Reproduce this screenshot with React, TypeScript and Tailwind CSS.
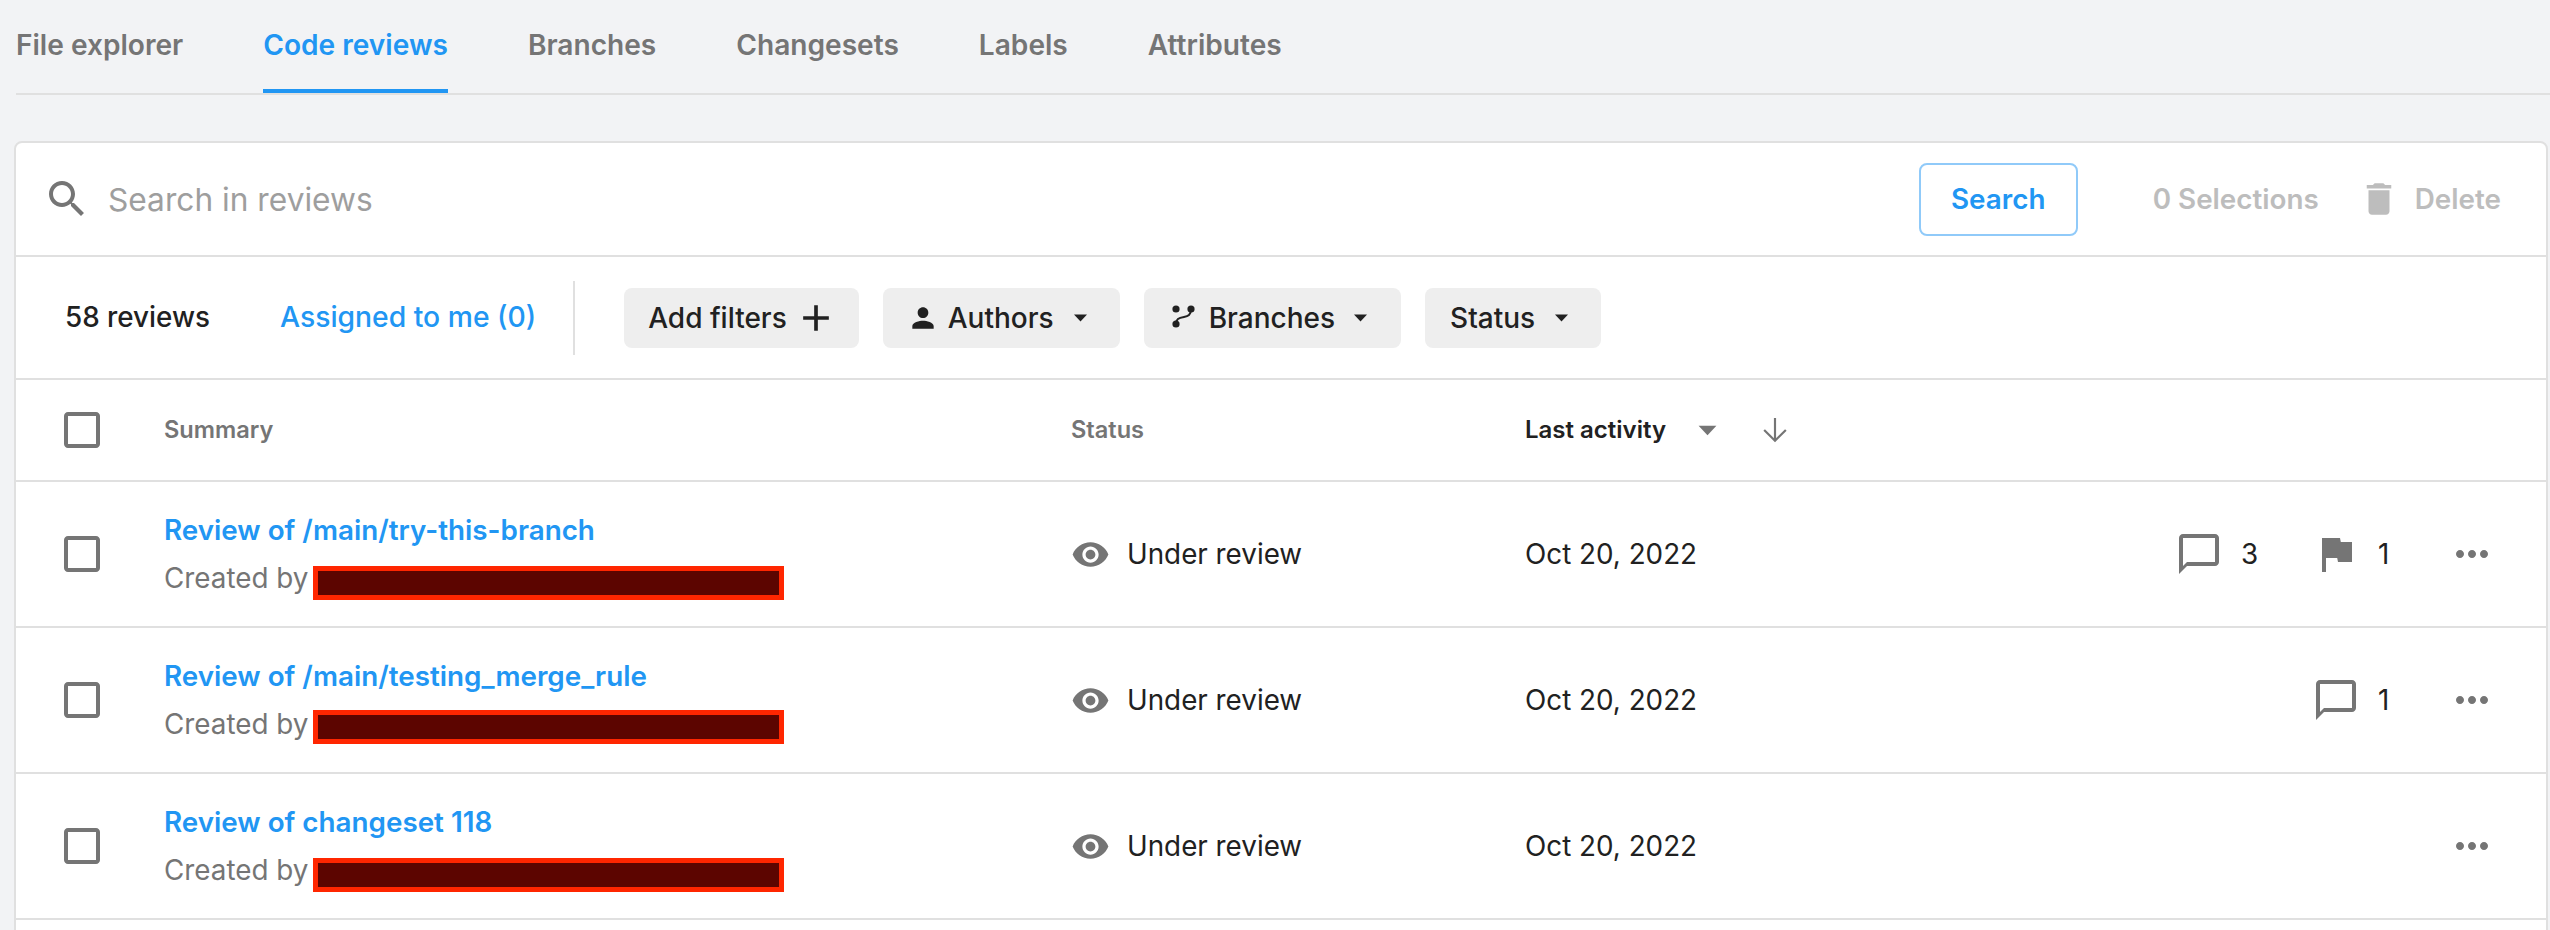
import React from "react";

const ICON = {
  search: "M15.5 14h-.79l-.28-.27C15.41 12.59 16 11.11 16 9.5 16 5.91 13.09 3 9.5 3S3 5.91 3 9.5 5.91 16 9.5 16c1.61 0 3.09-.59 4.23-1.57l.27.28v.79l5 4.99L20.49 19l-4.99-5zm-6 0C7.01 14 5 11.99 5 9.5S7.01 5 9.5 5 14 7.01 14 9.5 11.99 14 9.5 14z",
  trash: "M6 19c0 1.1.9 2 2 2h8c1.1 0 2-.9 2-2V7H6v12zM19 4h-3.5l-1-1h-5l-1 1H5v2h14V4z",
  eye: "M12 4.5C7 4.5 2.73 7.61 1 12c1.73 4.39 6 7.5 11 7.5s9.27-3.11 11-7.5c-1.73-4.39-6-7.5-11-7.5zM12 17c-2.76 0-5-2.24-5-5s2.24-5 5-5 5 2.24 5 5-2.24 5-5 5zm0-8c-1.66 0-3 1.34-3 3s1.34 3 3 3 3-1.34 3-3-1.34-3-3-3z",
  comment: "M20 2H4c-1.1 0-2 .9-2 2v18l4-4h14c1.1 0 2-.9 2-2V4c0-1.1-.9-2-2-2zm0 14H6l-2 2V4h16v12z",
  flag: "M14.4 6L14 4H5v17h2v-7h5.6l.4 2h7V6z",
  more: "M6 10c-1.1 0-2 .9-2 2s.9 2 2 2 2-.9 2-2-.9-2-2-2zm12 0c-1.1 0-2 .9-2 2s.9 2 2 2 2-.9 2-2-.9-2-2-2zm-6 0c-1.1 0-2 .9-2 2s.9 2 2 2 2-.9 2-2-.9-2-2-2z",
  check: "M19 5v14H5V5h14m0-2H5c-1.1 0-2 .9-2 2v14c0 1.1.9 2 2 2h14c1.1 0 2-.9 2-2V5c0-1.1-.9-2-2-2z",
  person: "M12 12c2.21 0 4-1.79 4-4s-1.79-4-4-4-4 1.79-4 4 1.79 4 4 4zm0 2c-2.67 0-8 1.34-8 4v2h16v-2c0-2.66-5.33-4-8-4z",
  add: "M19 13h-6v6h-2v-6H5v-2h6V5h2v6h6v2z",
};

function Icon({ d, className }: { d: string; className: string }) {
  return (
    <svg viewBox="0 0 24 24" fill="currentColor" className={className}>
      <path d={d} />
    </svg>
  );
}

function Caret({ className }: { className: string }) {
  return (
    <svg viewBox="0 0 13 8" fill="currentColor" className={className}>
      <path d="M0 0.5h13L6.5 7.5z" />
    </svg>
  );
}

function BranchIcon() {
  return (
    <svg viewBox="0 0 32 32" className="w-[32px] h-[32px] shrink-0 text-[#212121]" fill="currentColor">
      <circle cx="8" cy="7" r="3.6" />
      <circle cx="23" cy="7" r="3.6" />
      <circle cx="8" cy="22" r="3.6" />
      <path d="M8 22c0-5 2.500-6 8-7 4-.8 7-2 7-8" fill="none" stroke="currentColor" strokeWidth="2" />
    </svg>
  );
}

function Tab({ label, active }: { label: string; active?: boolean }) {
  return (
    <div
      className={
        active
          ? "h-[93px] flex items-center pt-[1px] border-b-[4px] border-[#2196f3] text-[#2196f3] text-[28.1px] font-semibold"
          : "h-[93px] flex items-center pt-[1px] border-b-[4px] border-transparent text-[#757575] text-[28.1px] font-semibold"
      }
    >
      {label}
    </div>
  );
}

function Chip({ children, className }: { children: React.ReactNode; className: string }) {
  return (
    <div className={"h-[60px] flex items-center bg-[#eeeeee] rounded-[8px] text-[28px] font-medium text-[#212121] " + className}>
      {children}
    </div>
  );
}

function Row({
  title,
  redactClass,
  comments,
  flags,
}: {
  title: string;
  redactClass: string;
  comments?: number;
  flags?: number;
}) {
  return (
    <div className="h-[146px] flex items-center border-b-2 border-[#e0e0e0]">
      <div className="w-[148px] shrink-0 pl-[42px]">
        <Icon d={ICON.check} className="w-[48px] h-[48px] text-[#757575]" />
      </div>
      <div className="w-[907px] shrink-0 flex flex-col gap-[8px]">
        <div className="h-[40px] leading-[40px] text-[27.8px] font-semibold text-[#2196f3]">{title}</div>
        <div className="h-[40px] flex items-center text-[27.8px] text-[#757575]">
          <span className="pt-[2px]">Created by</span>
          <div className={"ml-[5px] w-[471px] h-[34px] bg-[#5c0500] border-[5px] border-[#ff2600] " + redactClass} />
        </div>
      </div>
      <div className="w-[454px] shrink-0 flex items-center gap-[17px] text-[27.8px] text-[#212121]">
        <Icon d={ICON.eye} className="w-[39px] h-[39px] text-[#757575]" />
        <span className="pt-[2px]">Under review</span>
      </div>
      <div className="flex-1 pt-[2px] text-[27.8px] text-[#212121]">Oct 20, 2022</div>
      <div className="flex items-center text-[27.8px] text-[#212121] pr-[50px]">
        {comments !== undefined && (
          <div className={flags !== undefined ? "flex items-center gap-[18px] w-[82px] mr-[55px]" : "flex items-center gap-[18px] w-[82px]"}>
            <Icon d={ICON.comment} className="w-[48px] h-[48px] shrink-0 text-[#757575]" />
            <span className="pt-[1px]">{comments}</span>
          </div>
        )}
        {flags !== undefined && (
          <div className="flex items-center gap-[18px] w-[82px]">
            <Icon d={ICON.flag} className="w-[48px] h-[48px] shrink-0 text-[#757575]" />
            <span className="pt-[1px]">{flags}</span>
          </div>
        )}
        <Icon d={ICON.more} className="w-[48px] h-[48px] ml-[54px] text-[#757575]" />
      </div>
    </div>
  );
}

export default function App() {
  return (
    <div className="w-[2550px] h-[930px] overflow-hidden bg-[#f2f3f5] [font-family:Inter,sans-serif]">
      <div className="ml-[16px] h-[95px] border-b-2 border-[#e0e0e0] flex gap-[80px]">
        <Tab label="File explorer" />
        <Tab label="Code reviews" active />
        <Tab label="Branches" />
        <Tab label="Changesets" />
        <Tab label="Labels" />
        <Tab label="Attributes" />
      </div>

      <div className="mt-[46px] ml-[14px] mr-[2px] bg-white border-2 border-[#e0e0e0] rounded-[8px]">
        <div className="h-[114px] flex items-center border-b-2 border-[#e0e0e0]">
          <Icon d={ICON.search} className="ml-[27px] w-[48px] h-[48px] shrink-0 text-[#757575]" />
          <span className="ml-[17px] flex-1 pt-[2px] text-[31.7px] text-[#9e9e9e]">Search in reviews</span>
          <div className="w-[159px] h-[73px] flex items-center justify-center border-2 border-[#90caf9] rounded-[8px] pt-[1px] text-[27.8px] font-semibold text-[#2196f3]">
            Search
          </div>
          <span className="ml-[75px] pt-[1px] text-[27.8px] font-semibold text-[#bdbdbd]">0 Selections</span>
          <Icon d={ICON.trash} className="ml-[39px] w-[42px] h-[42px] shrink-0 text-[#bdbdbd]" />
          <span className="ml-[15px] mr-[45px] pt-[1px] text-[27.8px] font-semibold text-[#bdbdbd]">Delete</span>
        </div>

        <div className="h-[123px] flex items-center border-b-2 border-[#e0e0e0]">
          <span className="ml-[49px] text-[27.8px] font-medium text-[#212121]">58 reviews</span>
          <span className="ml-[70px] text-[28.3px] font-medium text-[#2196f3]">Assigned to me (0)</span>
          <div className="ml-[37px] w-[2px] h-[74px] bg-[#e0e0e0]" />
          <div className="ml-[49px] flex items-center gap-[24px]">
            <Chip className="pl-[24px] pr-[21px] gap-[7px]">
              <span>Add filters</span>
              <Icon d={ICON.add} className="w-[44px] h-[44px]" />
            </Chip>
            <Chip className="pl-[24px] pr-[33px]">
              <Icon d={ICON.person} className="w-[32px] h-[32px] shrink-0" />
              <span className="ml-[9px]">Authors</span>
              <Caret className="ml-[20px] w-[13px] h-[8px]" />
            </Chip>
            <Chip className="pl-[24px] pr-[34px]">
              <BranchIcon />
              <span className="ml-[9px]">Branches</span>
              <Caret className="ml-[19px] w-[13px] h-[8px]" />
            </Chip>
            <Chip className="pl-[25px] pr-[33px]">
              <span>Status</span>
              <Caret className="ml-[20px] w-[13px] h-[8px]" />
            </Chip>
          </div>
        </div>

        <div className="h-[102px] flex items-center border-b-2 border-[#e0e0e0]">
          <div className="w-[148px] shrink-0 pl-[42px]">
            <Icon d={ICON.check} className="w-[48px] h-[48px] text-[#757575]" />
          </div>
          <div className="w-[907px] shrink-0 text-[23.6px] font-semibold text-[#757575]">Summary</div>
          <div className="w-[454px] shrink-0 text-[23.6px] font-semibold text-[#757575]">Status</div>
          <div className="flex items-center text-[24px] font-semibold text-[#212121]">
            <span>Last activity</span>
            <Caret className="ml-[32px] w-[19px] h-[11px] text-[#757575]" />
            <svg viewBox="0 0 24 24" className="ml-[45px] w-[26px] h-[26px] text-[#757575]" fill="none" stroke="currentColor" strokeWidth="2">
              <path d="M12 1v21M2 12l10 10 10-10" />
            </svg>
          </div>
        </div>

        <Row title="Review of /main/try-this-branch" redactClass="mt-[9px]" comments={3} flags={1} />
        <Row title="Review of /main/testing_merge_rule" redactClass="mt-[6px]" comments={1} />
        <Row title="Review of changeset 118" redactClass="mt-[10px]" />
        <div className="h-[40px]" />
      </div>
    </div>
  );
}
